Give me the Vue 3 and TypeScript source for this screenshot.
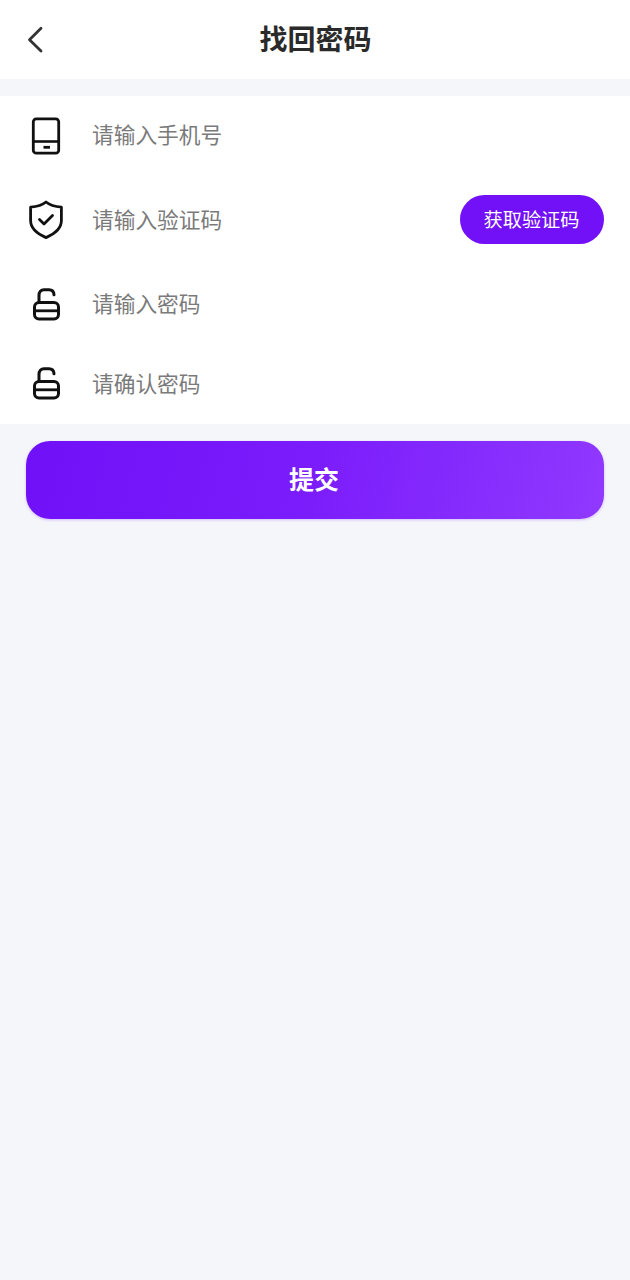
<script setup lang="ts">
import { ref } from 'vue';

const phone = ref('');
const code = ref('');
const password = ref('');
const confirmPassword = ref('');
</script>

<template>
  <div class="reset-page">
    <header class="reset-header">
      <button type="button" class="reset-header__back" aria-label="返回">
        <svg width="20" height="30" viewBox="0 0 20 30" fill="none" aria-hidden="true">
          <path d="M16 3.300 4.500 14.700 16 26.100" stroke="#333" stroke-width="2.800" stroke-linecap="round" stroke-linejoin="round" />
        </svg>
      </button>
      <h1 class="reset-header__title">找回密码</h1>
    </header>

    <form class="reset-form" @submit.prevent>
      <label class="reset-row">
        <span class="reset-row__icon">
          <svg width="40" height="40" viewBox="0 0 40 40" fill="none" aria-hidden="true">
            <rect x="7.300" y="2.800" width="25.400" height="34.400" rx="3" stroke="#111" stroke-width="2.800" />
            <path d="M7.300 25.500h25.400" stroke="#111" stroke-width="2.600" />
            <path d="M17.500 31.300h6.500" stroke="#111" stroke-width="2.800" />
          </svg>
        </span>
        <input v-model="phone" class="reset-row__input" type="tel" placeholder="请输入手机号" />
      </label>

      <label class="reset-row reset-row--code">
        <span class="reset-row__icon">
          <svg width="40" height="40" viewBox="0 0 40 40" fill="none" aria-hidden="true">
            <path d="M20 2c3.600 3 8.600 4.600 15.400 5.200v13.400c0 7.600-6.400 13.200-15.400 17C11 33.800 4.600 28.200 4.600 20.600V7.200C11.400 6.600 16.400 5 20 2Z" stroke="#111" stroke-width="2.800" stroke-linejoin="round" />
            <path d="M13.500 19.500l4.500 4.500 8.500-8.500" stroke="#111" stroke-width="2.800" stroke-linecap="round" stroke-linejoin="round" />
          </svg>
        </span>
        <input v-model="code" class="reset-row__input" type="text" placeholder="请输入验证码" />
        <button type="button" class="reset-row__code-btn">获取验证码</button>
      </label>

      <label class="reset-row">
        <span class="reset-row__icon">
          <svg width="40" height="40" viewBox="0 0 40 40" fill="none" aria-hidden="true">
            <path d="M13 17.500v-7c0-3.600 2-5.700 5-5.700h5c3 0 4.800 1.800 5 5" stroke="#111" stroke-width="3" stroke-linecap="round" />
            <rect x="8.500" y="17.500" width="24" height="16.500" rx="4.500" stroke="#111" stroke-width="3" />
            <path d="M8.500 25.800h24" stroke="#111" stroke-width="2.800" />
          </svg>
        </span>
        <input v-model="password" class="reset-row__input" type="password" placeholder="请输入密码" />
      </label>

      <label class="reset-row">
        <span class="reset-row__icon">
          <svg width="40" height="40" viewBox="0 0 40 40" fill="none" aria-hidden="true">
            <path d="M13 17.500v-7c0-3.600 2-5.700 5-5.700h5c3 0 4.800 1.800 5 5" stroke="#111" stroke-width="3" stroke-linecap="round" />
            <rect x="8.500" y="17.500" width="24" height="16.500" rx="4.500" stroke="#111" stroke-width="3" />
            <path d="M8.500 25.800h24" stroke="#111" stroke-width="2.800" />
          </svg>
        </span>
        <input v-model="confirmPassword" class="reset-row__input" type="password" placeholder="请确认密码" />
      </label>
    </form>

    <div class="reset-actions">
      <button type="button" class="reset-actions__submit">提交</button>
    </div>
  </div>
</template>

<style>
html,
body {
  margin: 0;
  background: #f5f6fa;
}
</style>

<style scoped>
.reset-page {
  min-height: 1280px;
  background: #f5f6fa;
  font-family: "Noto Sans CJK SC", "Noto Sans", sans-serif;
}

.reset-header {
  position: relative;
  display: flex;
  align-items: center;
  justify-content: center;
  height: 79px;
  padding: 0 0 3px 1px;
  box-sizing: border-box;
  background: #fff;
}

.reset-header__back {
  position: absolute;
  left: 25px;
  top: 25px;
  display: flex;
  width: 20px;
  height: 30px;
  margin: 0;
  padding: 0;
  border: 0;
  background: transparent;
}

.reset-header__title {
  margin: 0;
  color: #2a2a2a;
  font-size: 28px;
  font-weight: 700;
  line-height: 1;
}

.reset-form {
  display: flex;
  flex-direction: column;
  margin-top: 17px;
  background: #fff;
}

.reset-row {
  display: flex;
  align-items: center;
  height: 79px;
  padding: 0 26px;
}

.reset-row--code {
  height: 90px;
}

.reset-row:last-child {
  height: 80px;
}

.reset-row__icon {
  display: flex;
  flex-shrink: 0;
  width: 40px;
  height: 40px;
  margin-right: 26px;
}

.reset-row__input {
  flex: 1;
  min-width: 0;
  padding: 0 0 4px;
  border: 0;
  outline: 0;
  background: transparent;
  color: #333;
  font: inherit;
  font-size: 21.700px;
}

.reset-row__input::placeholder {
  color: #7a7a7a;
  opacity: 1;
}

.reset-row__code-btn {
  flex-shrink: 0;
  width: 144px;
  height: 49px;
  margin-bottom: 2px;
  padding: 0 1px 1px 0;
  border: 0;
  border-radius: 25px;
  background: #7210f8;
  color: #fff;
  font: inherit;
  font-size: 19.200px;
}

.reset-actions {
  padding: 17px 26px 0;
}

.reset-actions__submit {
  display: block;
  width: 100%;
  height: 78px;
  padding: 0 2px 4px 0;
  border: 0;
  border-radius: 24px;
  background: linear-gradient(104deg, #7010f8 0%, #7a1cfb 48%, #9039ff 100%);
  box-shadow: 0 1px 3px rgba(114, 16, 248, 0.25);
  color: #fff;
  font: inherit;
  font-size: 25px;
  font-weight: 700;
}
</style>
